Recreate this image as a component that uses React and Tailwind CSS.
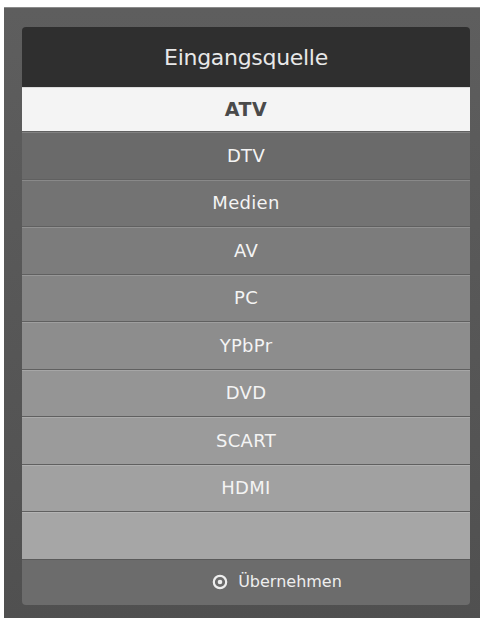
const sources = [
  { name: "DTV", bg: "bg-[#6a6a6a]" },
  { name: "Medien", bg: "bg-[#737373]" },
  { name: "AV", bg: "bg-[#7c7c7c]" },
  { name: "PC", bg: "bg-[#858585]" },
  { name: "YPbPr", bg: "bg-[#8d8d8d]" },
  { name: "DVD", bg: "bg-[#959595]" },
  { name: "SCART", bg: "bg-[#9b9b9b]" },
  { name: "HDMI", bg: "bg-[#a1a1a1]" },
  { name: "", bg: "bg-[#a6a6a6]" },
];

export default function App() {
  return (
    <div
      className="w-[484px] h-[623px] bg-white pt-[7px] pl-[4px]"
      style={{ fontFamily: '"DejaVu Sans", Verdana, sans-serif' }}
    >
      <div className="w-[476px] h-[611px] bg-gradient-to-b from-[#5e5e5e] to-[#505050] border-t border-[#8a8a8a] pt-[19px] pl-[18px] pr-[10px] pb-[13px]">
        <div className="h-full rounded-[4px] overflow-hidden flex flex-col">
          <div className="h-[60px] bg-[#2f2f2f] flex items-center justify-center text-[#e8e8e8] text-[22px] tracking-[-0.3px]">
            Eingangsquelle
          </div>
          <div className="h-[44px] bg-[#f4f4f4] border-t border-[#dcdcdc] flex items-center justify-center text-[#4a4a4a] text-[19px] font-bold tracking-[0.5px]">
            ATV
          </div>
          {sources.map((s, i) => (
            <div
              key={i}
              className={`h-[47.5px] ${s.bg} border-t border-[#606060] shadow-[inset_0_1px_0_rgba(255,255,255,0.16)] flex items-center justify-center text-[#f4f4f4] text-[18px] tracking-[0.3px]`}
            >
              {s.name}
            </div>
          ))}
          <div className="flex-1 bg-[#6c6c6c] border-t border-[#5a5a5a] flex items-center justify-center pl-[62px] gap-[10px] text-[#eeeeee] text-[16px]">
            <svg width="16" height="16" viewBox="0 0 16 16">
              <circle cx="8" cy="8" r="6.2" fill="none" stroke="#eeeeee" strokeWidth="2.2" />
              <circle cx="8" cy="8" r="2.3" fill="#eeeeee" />
            </svg>
            <span>Übernehmen</span>
          </div>
        </div>
      </div>
    </div>
  );
}
